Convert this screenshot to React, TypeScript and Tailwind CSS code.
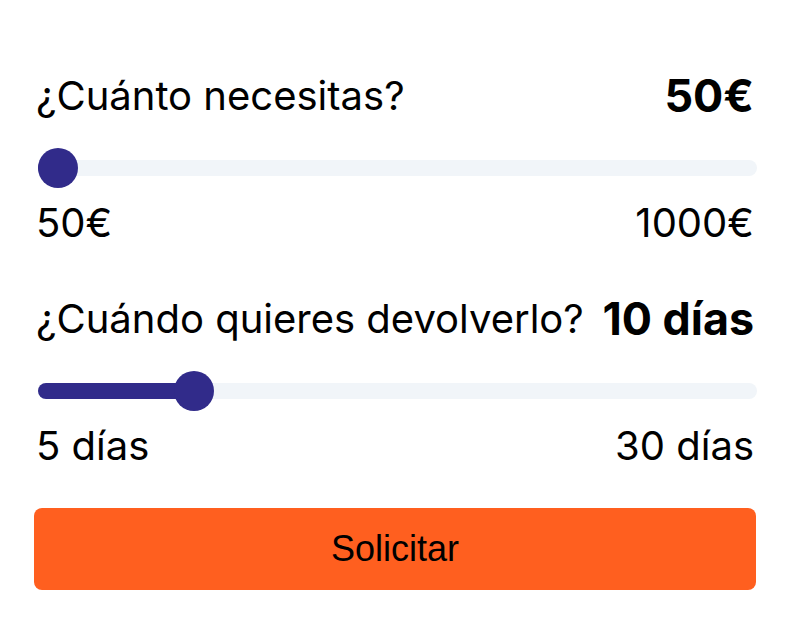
import { useState } from 'react';

const inter = { fontFamily: 'Inter, "Noto Sans", sans-serif' };

interface SliderProps {
  value: number;
  min: number;
  max: number;
  onChange: (v: number) => void;
}

function Slider({ value, min, max }: SliderProps) {
  const pct = (value - min) / (max - min);
  return (
    <div className="relative ml-[2px] mr-[-3px] h-10">
      <div className="absolute inset-x-0 top-1/2 h-4 -translate-y-1/2 rounded-full bg-[#f1f5f9]" />
      <div
        className="absolute left-0 top-1/2 h-4 -translate-y-1/2 rounded-full bg-[#312b8a]"
        style={{ width: `calc(${pct} * (100% - 40px) + 20px)` }}
      />
      <div
        className="absolute top-0 h-10 w-10 rounded-full bg-[#312b8a]"
        style={{ left: `calc(${pct} * (100% - 40px))` }}
      />
    </div>
  );
}

interface FieldProps {
  label: string;
  display: string;
  value: number;
  min: number;
  max: number;
  minLabel: string;
  maxLabel: string;
  onChange: (v: number) => void;
}

function Field({ label, display, value, min, max, minLabel, maxLabel, onChange }: FieldProps) {
  return (
    <div className="flex flex-col">
      <div className="flex h-[52px] items-center justify-between whitespace-nowrap text-black">
        <span className="text-[40px] leading-none">{label}</span>
        <span className="text-[44.8px] font-bold leading-none">{display}</span>
      </div>
      <div className="mt-[26px]">
        <Slider value={value} min={min} max={max} onChange={onChange} />
      </div>
      <div className="mt-[15px] flex justify-between text-[40px] leading-none text-black">
        <span>{minLabel}</span>
        <span>{maxLabel}</span>
      </div>
    </div>
  );
}

export default function App() {
  const [amount, setAmount] = useState(50);
  const [days, setDays] = useState(10);

  return (
    <div className="min-h-[623px] w-[790px] bg-white px-[36px] pt-[70px]" style={inter}>
      <Field
        label="¿Cuánto necesitas?"
        display={`${amount}€`}
        value={amount}
        min={50}
        max={1000}
        minLabel="50€"
        maxLabel="1000€"
        onChange={setAmount}
      />
      <div className="mt-[50px]">
        <Field
          label="¿Cuándo quieres devolverlo?"
          display={`${days} días`}
          value={days}
          min={5}
          max={30}
          minLabel="5 días"
          maxLabel="30 días"
          onChange={setDays}
        />
      </div>
      <button
        className="mx-[-2px] mt-[42px] flex h-[82px] w-[calc(100%+4px)] items-center justify-center rounded-lg bg-[#ff5f1f] text-[36px] text-black"
        style={{ fontFamily: '"Liberation Sans", Arial, sans-serif' }}
      >
        Solicitar
      </button>
    </div>
  );
}
